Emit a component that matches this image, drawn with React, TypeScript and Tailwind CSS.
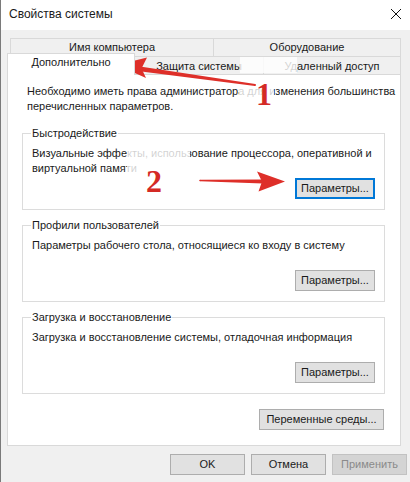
import React from "react";

const btn =
  "h-[21px] flex items-center justify-center bg-[#e1e1e1] border border-[#adadad] text-[11px] leading-[15px]";

function Group({
  title,
  text,
  focused,
}: {
  title: string;
  text: React.ReactNode;
  focused?: boolean;
}) {
  return (
    <div className="relative border border-[#dcdcdc] pl-[9px] pr-[9px] pt-[12px] pb-[10px]">
      <div className="absolute -top-[8px] left-[8px] bg-white px-[1px] leading-[15px]">
        {title}
      </div>
      <div className="h-[30px] whitespace-nowrap">{text}</div>
      <div className="flex justify-end mt-[2px]">
        <div
          className={
            focused
              ? "w-[80px] h-[21px] flex items-center justify-center bg-[#e1e1e1] border-2 border-[#0078d7]"
              : "w-[80px] " + btn
          }
        >
          Параметры...
        </div>
      </div>
    </div>
  );
}

export default function SystemProperties() {
  return (
    <div className="relative w-[410px] h-[482px] overflow-hidden bg-[#f0f0f0] border-l border-[#7a7a7a] font-['Liberation_Sans',Arial,sans-serif] text-[11px] leading-[15px] text-[#1a1a1a]">
      {/* title bar */}
      <div className="h-[30px] bg-white flex items-center justify-between pl-[8px] pr-[9px] pb-[2px]">
        <span className="text-[12px]">Свойства системы</span>
        <svg width="10" height="10" viewBox="0 0 10 10">
          <path d="M0 0 L10 10 M10 0 L0 10" stroke="#111" strokeWidth="1" />
        </svg>
      </div>

      <div className="pl-[6px]">
        {/* tabs, upper row */}
        <div className="flex h-[18px] mt-[8px] ml-[3px]">
          <div className="w-[203px] flex items-center justify-center border-l border-t border-[#d9d9d9]">
            Имя компьютера
          </div>
          <div className="w-[188px] flex items-center justify-center border-l border-t border-r border-[#d9d9d9]">
            Оборудование
          </div>
        </div>

        {/* tabs, lower row */}
        <div className="flex items-end h-[18px]">
          <div className="relative z-10 w-[128px] h-[22px] -mb-[1px] bg-white border-l border-t border-r border-[#d9d9d9] flex justify-center pt-[1px]">
            Дополнительно
          </div>
          <div className="w-[129px] h-[18px] flex items-center justify-center border-t border-r border-[#d9d9d9] pt-[1px]">
            Защита системы
          </div>
          <div className="w-[137px] h-[18px] flex items-center justify-center border-t border-r border-[#d9d9d9] pt-[1px]">
            Удаленный доступ
          </div>
        </div>

        {/* page */}
        <div className="w-[394px] bg-white border border-[#d9d9d9] pl-[14px] pr-[15px] pt-[9px] pb-[15px]">
          <p className="ml-[5px] whitespace-nowrap">
            Необходимо иметь права администратора для изменения большинства
            <br />
            перечисленных параметров.
          </p>

          <div className="mt-[19px]">
            <Group
              title="Быстродействие"
              focused
              text={
                <>
                  Визуальные эффекты, использование процессора, оперативной и
                  <br />
                  виртуальной памяти
                </>
              }
            />
          </div>
          <div className="mt-[15px]">
            <Group
              title="Профили пользователей"
              text="Параметры рабочего стола, относящиеся ко входу в систему"
            />
          </div>
          <div className="mt-[15px]">
            <Group
              title="Загрузка и восстановление"
              text="Загрузка и восстановление системы, отладочная информация"
            />
          </div>

          <div className="flex justify-end mt-[15px] mr-[1px]">
            <div className={"w-[125px] " + btn}>Переменные среды...</div>
          </div>
        </div>

        {/* dialog buttons */}
        <div className="flex justify-end gap-[6px] mt-[8px] pr-[3px]">
          <div className={"w-[75px] " + btn}>OK</div>
          <div className={"w-[75px] " + btn}>Отмена</div>
          <div className="w-[75px] h-[21px] flex items-center justify-center bg-[#d4d4d4] border border-[#c2c2c2] text-[#8a8a8a]">
            Применить
          </div>
        </div>
      </div>

      {/* annotations drawn on top of the screenshot */}
      <div className="absolute top-0 -left-px w-[410px] h-[482px] pointer-events-none">
        <svg width="410" height="482" className="absolute left-0 top-0">
          <rect x="240" y="57" width="57" height="16" fill="#fff" opacity="0.8" />
          <rect x="239" y="84" width="35" height="15" fill="#fff" opacity="0.8" />
          <rect x="127" y="146" width="63" height="30" fill="#fff" opacity="0.8" />

          <g fill="#de2f29">
            <polygon points="117,65 147,57.5 141.5,68.5 146,78" />
            <polygon points="140,66.4 255.2,84 255,86 139.5,71.3" />
            <circle cx="255" cy="85" r="1" />

            <polygon points="285,181.5 257,171.5 262,181.5 258.5,191.5" />
            <polygon points="200,179.8 263,179.4 263,183.6 200,181.3" />
            <circle cx="200" cy="180.5" r="0.8" />
          </g>
        </svg>
        <span className="absolute left-[256px] top-[78px] font-['Liberation_Serif',serif] font-bold text-[32px] leading-none text-[#d42a25]">
          1
        </span>
        <span className="absolute left-[146px] top-[165px] font-['Liberation_Serif',serif] font-bold text-[32px] leading-none text-[#d42a25]">
          2
        </span>
      </div>
    </div>
  );
}
